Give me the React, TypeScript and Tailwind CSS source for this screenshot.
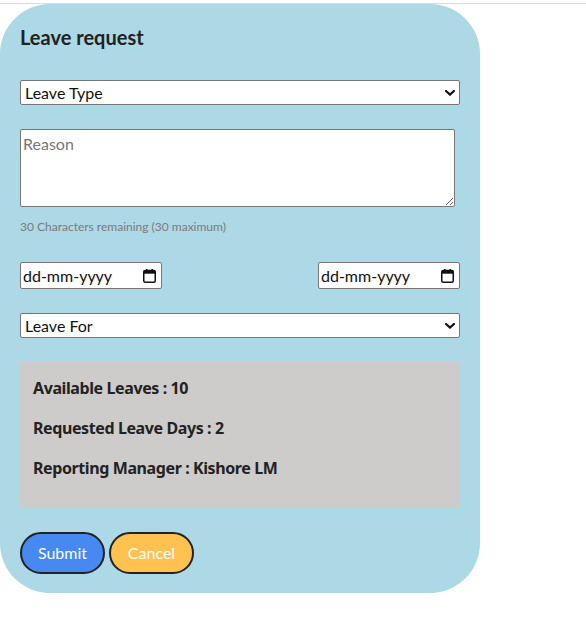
import React from "react";

const Chevron = () => (
  <svg
    className="pointer-events-none absolute right-[5px] top-1/2 -translate-y-1/2"
    width="10"
    height="6"
    viewBox="0 0 10 6"
    fill="none"
  >
    <path d="M1 1 L5 4.6 L9 1" stroke="#111" strokeWidth="2.2" strokeLinecap="square" />
  </svg>
);

const Calendar = () => (
  <svg width="13" height="14" viewBox="0 0 13 14" fill="none">
    <rect x="0.75" y="1.5" width="11.5" height="11.75" rx="1.5" stroke="#111" strokeWidth="1.5" />
    <rect x="0.75" y="1.5" width="11.5" height="3.2" fill="#111" />
    <rect x="3" y="0" width="1.5" height="2" fill="#111" />
    <rect x="8.5" y="0" width="1.5" height="2" fill="#111" />
  </svg>
);

const DateBox = () => (
  <div className="flex h-[27px] w-[142px] items-center justify-between rounded-[2px] border border-[#767676] bg-white pl-[2px] pr-[5px] text-[16px] text-[#111]">
    <span>dd-mm-yyyy</span>
    <Calendar />
  </div>
);

export default function App() {
  return (
    <div
      className="h-[628px] w-[586px] bg-white"
      style={{ fontFamily: 'Lato, "Noto Sans", sans-serif' }}
    >
      <div className="mt-[3px] h-px w-full bg-[#dcdcdc]" />
      <div className="flex h-[589px] w-[480px] flex-col rounded-[50px] bg-[#add8e6] px-[20px]">
        <h2 className="mt-[19px] text-[20px] font-bold leading-[28px] text-[#222]">
          Leave request
        </h2>

        <div className="relative mt-[29px] w-[440px]">
          <select className="h-[25px] w-full appearance-none rounded-[2px] border border-[#767676] bg-white pl-[4px] text-[16px] leading-[20px] text-[#111] outline-none">
            <option>Leave Type</option>
          </select>
          <Chevron />
        </div>

        <textarea
          placeholder="Reason"
          className="mt-[24px] h-[78px] w-[435px] rounded-[2px] border border-[#767676] bg-white px-[2px] pt-[3px] text-[16px] leading-[22px] text-[#111] placeholder:text-[#777] outline-none"
        />

        <div className="mt-[12px] text-[12px] leading-[16px] text-[#7b7b7b]">
          30 Characters remaining (30 maximum)
        </div>

        <div className="mt-[27px] flex w-[440px] justify-between">
          <DateBox />
          <DateBox />
        </div>

        <div className="relative mt-[24px] w-[440px]">
          <select className="h-[25px] w-full appearance-none rounded-[2px] border border-[#767676] bg-white pl-[4px] text-[16px] leading-[20px] text-[#111] outline-none">
            <option>Leave For</option>
          </select>
          <Chevron />
        </div>

        <div
          className="mt-[24px] flex h-[146px] w-[440px] flex-col gap-[16px] bg-[#cecccb] px-[13px] pt-[14px] text-[16px] font-bold leading-[24px] tracking-[-0.4px] text-[#222]"
          style={{ fontFamily: '"Noto Sans", Lato, sans-serif' }}
        >
          <p>Available Leaves : 10</p>
          <p>Requested Leave Days : 2</p>
          <p>Reporting Manager : Kishore LM</p>
        </div>

        <div className="mt-[24px] flex gap-[4px]">
          <button className="h-[42px] w-[85px] rounded-full border-2 border-[#222] bg-[#4689f1] text-[16px] text-white">
            Submit
          </button>
          <button className="h-[42px] w-[85px] rounded-full border-2 border-[#222] bg-[#ffc150] text-[16px] text-white">
            Cancel
          </button>
        </div>
      </div>
    </div>
  );
}
